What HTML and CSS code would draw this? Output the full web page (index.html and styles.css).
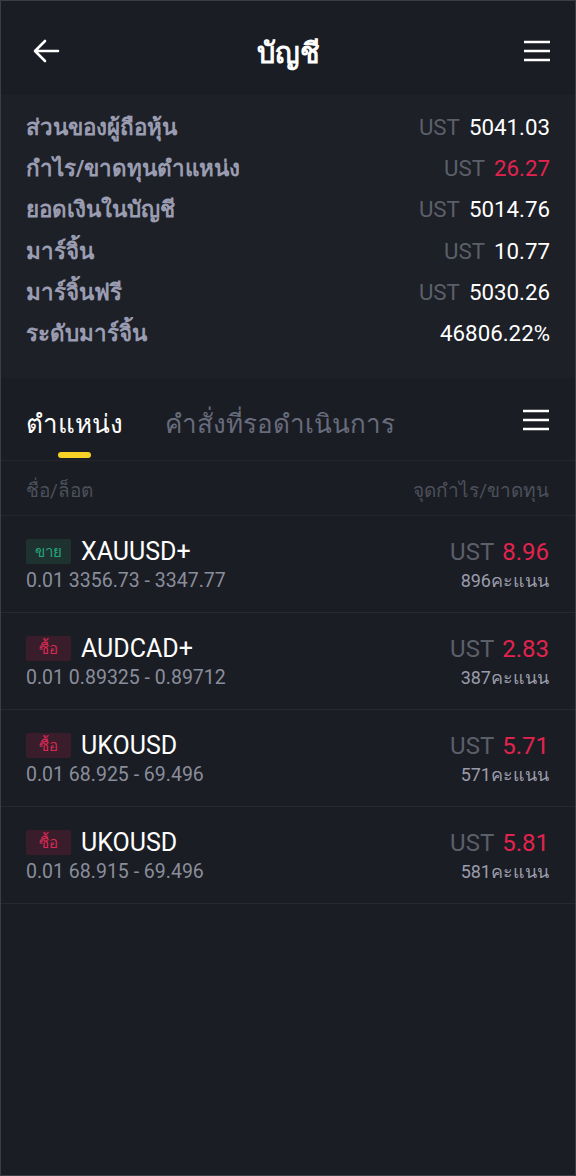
FILE: index.html
```html
<!DOCTYPE html>
<html lang="th">
<head>
<meta charset="utf-8">
<link rel="stylesheet" href="styles.css">
</head>
<body>
<div class="screen">
  <header class="topbar">
    <svg class="icon back" viewBox="0 0 28 24" width="28" height="24"><path d="M26 12H3M13 2L3 12l10 10" fill="none" stroke="#fff" stroke-width="2.6" stroke-linecap="round" stroke-linejoin="round"/></svg>
    <div class="title">บัญชี</div>
    <svg class="icon menu" viewBox="0 0 26 22" width="26" height="22"><path d="M0 2h26M0 11h26M0 20h26" stroke="#fff" stroke-width="2.4"/></svg>
  </header>

  <section class="account">
    <div class="arow"><span class="alabel">ส่วนของผู้ถือหุ้น</span><span class="aval"><span class="cur">UST</span><span>5041.03</span></span></div>
    <div class="arow"><span class="alabel">กำไร/ขาดทุนตำแหน่ง</span><span class="aval"><span class="cur">UST</span><span class="neg">26.27</span></span></div>
    <div class="arow"><span class="alabel">ยอดเงินในบัญชี</span><span class="aval"><span class="cur">UST</span><span>5014.76</span></span></div>
    <div class="arow"><span class="alabel">มาร์จิ้น</span><span class="aval"><span class="cur">UST</span><span>10.77</span></span></div>
    <div class="arow"><span class="alabel">มาร์จิ้นฟรี</span><span class="aval"><span class="cur">UST</span><span>5030.26</span></span></div>
    <div class="arow"><span class="alabel">ระดับมาร์จิ้น</span><span class="aval"><span>46806.22%</span></span></div>
  </section>

  <nav class="tabs">
    <div class="tab active">ตำแหน่ง</div>
    <div class="tab">คำสั่งที่รอดำเนินการ</div>
    <svg class="icon tabmenu" viewBox="0 0 26 22" width="26" height="22"><path d="M0 2h26M0 11h26M0 20h26" stroke="#fff" stroke-width="2.4"/></svg>
  </nav>

  <div class="colhead"><span>ชื่อ/ล็อต</span><span>จุดกำไร/ขาดทุน</span></div>

  <div class="list">
    <div class="pos">
      <div class="left">
        <div class="line1"><span class="badge sell">ขาย</span><span class="sym">XAUUSD+</span></div>
        <div class="sub">0.01 3356.73 - 3347.77</div>
      </div>
      <div class="right">
        <div class="line1"><span class="cur">UST</span><span class="neg">8.96</span></div>
        <div class="sub">896คะแนน</div>
      </div>
    </div>
    <div class="pos">
      <div class="left">
        <div class="line1"><span class="badge buy">ซื้อ</span><span class="sym">AUDCAD+</span></div>
        <div class="sub">0.01 0.89325 - 0.89712</div>
      </div>
      <div class="right">
        <div class="line1"><span class="cur">UST</span><span class="neg">2.83</span></div>
        <div class="sub">387คะแนน</div>
      </div>
    </div>
    <div class="pos">
      <div class="left">
        <div class="line1"><span class="badge buy">ซื้อ</span><span class="sym">UKOUSD</span></div>
        <div class="sub">0.01 68.925 - 69.496</div>
      </div>
      <div class="right">
        <div class="line1"><span class="cur">UST</span><span class="neg">5.71</span></div>
        <div class="sub">571คะแนน</div>
      </div>
    </div>
    <div class="pos">
      <div class="left">
        <div class="line1"><span class="badge buy">ซื้อ</span><span class="sym">UKOUSD</span></div>
        <div class="sub">0.01 68.915 - 69.496</div>
      </div>
      <div class="right">
        <div class="line1"><span class="cur">UST</span><span class="neg">5.81</span></div>
        <div class="sub">581คะแนน</div>
      </div>
    </div>
  </div>
</div>
</body>
</html>
```

FILE: styles.css
```css
* { box-sizing: border-box; }
html, body { margin: 0; padding: 0; background: #1a1d23; }
body { font-family: Roboto, "Noto Sans", sans-serif; color: #fff; }

.screen {
  width: 576px;
  height: 1176px;
  border: 1px solid #3b3e45;
  background: #1a1d23;
  display: flex;
  flex-direction: column;
  overflow: hidden;
}

.topbar {
  height: 94px;
  display: flex;
  align-items: center;
  justify-content: space-between;
  padding: 6px 25px 0 31px;
  flex-shrink: 0;
}
.icon { display: block; }
.title {
  font-size: 29px;
  font-weight: 700;
  color: #fff;
  margin-right: 8px;
  margin-top: 3px;
}

.account {
  background: #1d2027;
  padding: 11px 25px 24px 25px;
  display: flex;
  flex-direction: column;
}
.arow {
  height: 41.3px;
  display: flex;
  align-items: center;
  justify-content: space-between;
}
.alabel {
  font-size: 22.4px;
  font-weight: 700;
  color: #9a9cb1;
}
.aval {
  display: flex;
  gap: 9px;
  font-size: 22.3px;
  color: #fff;
}
.cur { color: #5b5f6a; }
.neg { color: #e3234f; }

.tabs {
  height: 83px;
  display: flex;
  align-items: center;
  padding: 10px 26px 0 25px;
  gap: 42px;
  border-bottom: 1px solid #23262d;
  flex-shrink: 0;
}
.tab {
  position: relative;
  font-size: 26px;
  color: #676b7c;
}
.tab.active { color: #fff; }
.tab.active::after {
  content: "";
  position: absolute;
  left: 32px;
  top: 49px;
  width: 33px;
  height: 6px;
  border-radius: 3px;
  background: #f5d225;
}
.tabmenu { margin-left: auto; margin-top: -8px; }

.colhead {
  height: 55px;
  display: flex;
  align-items: center;
  justify-content: space-between;
  padding: 4px 26px 0 25px;
  font-size: 19px;
  color: #4c505c;
  border-bottom: 1px solid #23262d;
}

.list { display: flex; flex-direction: column; }
.pos {
  height: 97px;
  display: flex;
  justify-content: space-between;
  padding: 21px 26px 0 25px;
  border-bottom: 1px solid #262930;
}
.left, .right { display: flex; flex-direction: column; }
.right { align-items: flex-end; }
.line1 {
  height: 30px;
  display: flex;
  align-items: center;
  font-size: 25px;
}
.right .line1 { gap: 8px; font-size: 24px; }
.sym { color: #fff; margin-left: 10px; }
.badge {
  width: 45px;
  height: 25px;
  display: inline-flex;
  align-items: center;
  justify-content: center;
  font-size: 15px;
  border-radius: 2px;
}
.badge.sell { background: #1e322f; color: #25a77b; }
.badge.buy { background: #3a1d2b; color: #d82a55; }
.sub {
  font-size: 19.5px;
  color: #8a8d9c;
  line-height: 28px;
}
.right .sub { color: #9a9cac; font-size: 18px; }
```
